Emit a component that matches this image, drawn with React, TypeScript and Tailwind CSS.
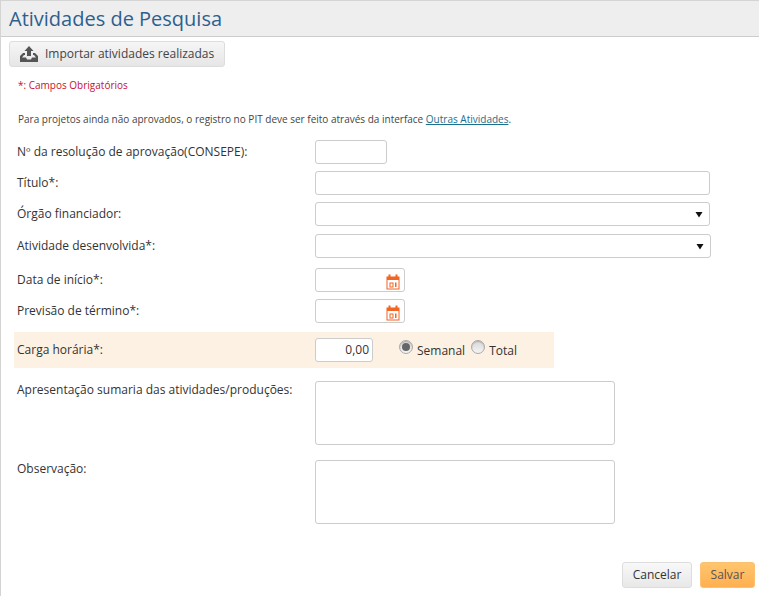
const inputClass = 'h-6 rounded-[3px] border border-[#ccc] bg-white';

function CalendarIcon() {
    return (
        <svg width="14" height="16" viewBox="0 0 14 16" className="absolute right-[4px] top-[5px]" fill="none">
            <rect x="1" y="3" width="12" height="12" stroke="#f26522" strokeWidth="1" fill="none" />
            <rect x="1" y="3" width="12" height="3" fill="#f26522" />
            <rect x="2.5" y="0.5" width="2" height="3.5" fill="#f26522" />
            <rect x="9.5" y="0.5" width="2" height="3.5" fill="#f26522" />
            <rect x="4" y="9" width="3" height="4" stroke="#f26522" strokeWidth="1" />
            <rect x="9" y="8.5" width="1.5" height="4.5" fill="#f26522" />
        </svg>
    );
}

function SelectArrow() {
    return (
        <svg width="8" height="7" viewBox="0 0 8 7" className="absolute right-[6px] top-[8px]">
            <path d="M0.5 1h7L4 6.5z" fill="#111" />
        </svg>
    );
}

function Label({ children }: { children: React.ReactNode }) {
    return <label className="w-[298px] shrink-0 text-xs leading-[18px] text-[#333]">{children}</label>;
}

function Radio({ checked }: { checked?: boolean }) {
    return (
        <span className="flex h-[14px] w-[14px] items-center justify-center rounded-full border border-[#aaa] bg-gradient-to-b from-[#d8d8d8] to-[#f4f4f4] shadow-[inset_0_1px_1px_rgba(0,0,0,0.2)]">
            {checked && <span className="h-[8px] w-[8px] rounded-full bg-[#666]" />}
        </span>
    );
}

export default function App() {
    return (
        <div className="h-[596px] w-[759px] overflow-hidden bg-white font-['Open_Sans',sans-serif] text-xs text-[#333]">
            <div className="h-full border-l border-t border-[#d4d4d4]">
                {/* Header */}
                <div className="flex h-[36px] items-center border-b border-[#ccc] bg-[#eeeeee] pl-[8px]">
                    <h1 className="text-[20px] leading-none text-[#2e5f8e]">Atividades de Pesquisa</h1>
                </div>

                <div className="pl-[8px] pt-[4px]">
                    <button className="flex h-[26px] w-[216px] items-center rounded-[3px] border border-[#ddd] bg-gradient-to-b from-[#f6f6f6] to-[#e6e6e6] pl-[10px] text-xs text-[#444]">
                        <svg width="18" height="16" viewBox="0 0 18 16" className="mr-[7px]">
                            <path d="M9 0l4.5 5H11v5H7V5H4.5z" fill="#555" />
                            <path d="M0 10l3-3h2v2H4l-2 2.5h4l1 2h4l1-2h4L14 9h-1V7h2l3 3v6H0z" fill="#555" />
                        </svg>
                        Importar atividades realizadas
                    </button>
                    <p className="ml-[9px] mt-[10px] text-[10px] leading-[16px] text-[#c8102e]">*: Campos Obrigatórios</p>
                    <p className="ml-[9px] mt-[18px] text-[10px] leading-[16px] text-[#444]">
                        Para projetos ainda não aprovados, o registro no PIT deve ser feito através da interface{' '}
                        <a className="text-[#1a6f8e] underline">Outras Atividades</a>.
                    </p>
                </div>

                <form className="mt-[13px] pl-[16px]">
                    <div className="flex h-6 items-center">
                        <Label>Nº da resolução de aprovação(CONSEPE):</Label>
                        <div className={`${inputClass} w-[72px]`} />
                    </div>
                    <div className="mt-[7px] flex h-6 items-center">
                        <Label>Título*:</Label>
                        <div className={`${inputClass} w-[395px]`} />
                    </div>
                    <div className="mt-[7px] flex h-6 items-center">
                        <Label>Órgão financiador:</Label>
                        <div className={`${inputClass} relative w-[395px]`}>
                            <SelectArrow />
                        </div>
                    </div>
                    <div className="mt-[8px] flex h-6 items-center">
                        <Label>Atividade desenvolvida*:</Label>
                        <div className={`${inputClass} relative w-[396px]`}>
                            <SelectArrow />
                        </div>
                    </div>
                    <div className="mt-[10px] flex h-6 items-center">
                        <Label>Data de início*:</Label>
                        <div className={`${inputClass} relative w-[90px]`}>
                            <CalendarIcon />
                        </div>
                    </div>
                    <div className="mt-[7px] flex h-6 items-center">
                        <Label>Previsão de término*:</Label>
                        <div className={`${inputClass} relative w-[90px]`}>
                            <CalendarIcon />
                        </div>
                    </div>

                    <div className="-ml-[3px] mt-[9px] flex h-[36px] w-[540px] items-center bg-[#fdf1e3] pl-[3px]">
                        <Label>Carga horária*:</Label>
                        <div className={`${inputClass} w-[58px] pr-[3px] text-right leading-[22px]`}>0,00</div>
                        <div className="ml-[26px] flex items-center">
                            <span className="-mt-[6px]"><Radio checked /></span>
                            <span className="ml-[4px] mt-[2px]">Semanal</span>
                            <span className="-mt-[6px] ml-[6px]"><Radio /></span>
                            <span className="ml-[4px] mt-[2px]">Total</span>
                        </div>
                    </div>

                    <div className="mt-[13px] flex">
                        <Label>Apresentação sumaria das atividades/produções:</Label>
                        <div className="h-[64px] w-[300px] rounded-[3px] border border-[#ccc]" />
                    </div>
                    <div className="mt-[15px] flex">
                        <Label>Observação:</Label>
                        <div className="h-[64px] w-[300px] rounded-[3px] border border-[#ccc]" />
                    </div>
                </form>

                <div className="mt-[38px] flex justify-end gap-[8px] pr-[4px]">
                    <button className="h-[26px] w-[70px] rounded-[3px] border border-[#ddd] bg-gradient-to-b from-[#f8f8f8] to-[#e8e8e8] text-xs text-[#333]">
                        Cancelar
                    </button>
                    <button className="h-[26px] w-[55px] rounded-[3px] border border-[#fbc070] bg-gradient-to-b from-[#ffc56e] to-[#ffb050] text-xs text-[#555]">
                        Salvar
                    </button>
                </div>
            </div>
        </div>
    );
}
